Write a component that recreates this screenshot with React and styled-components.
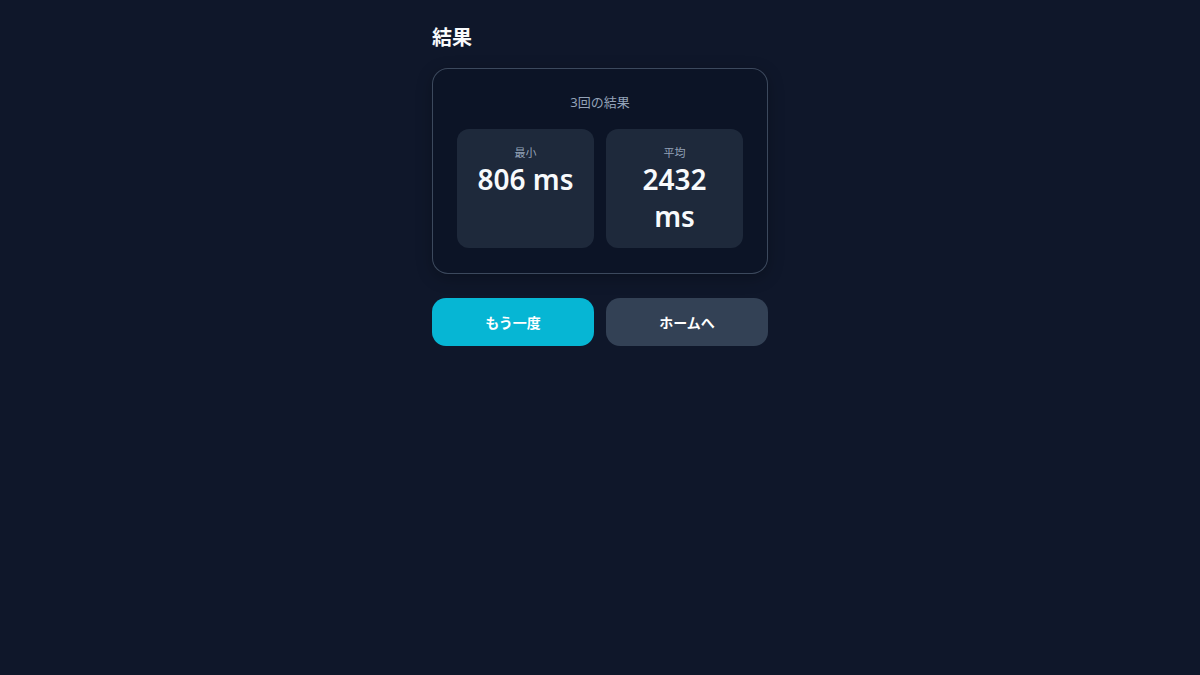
import React from 'react';
import styled, { createGlobalStyle } from 'styled-components';

const GlobalStyle = createGlobalStyle`
  * { box-sizing: border-box; }
  html, body {
    margin: 0;
    background: #0f172a;
    color: #f8fafc;
    font-family: "Noto Sans", "Noto Sans CJK JP", sans-serif;
  }
`;

const Page = styled.div`
  min-height: 675px;
  display: flex;
  justify-content: center;
  padding: 24px 0;
`;

const Column = styled.div`
  width: 336px;
`;

const Title = styled.h2`
  margin: 0 0 16px;
  font-size: 20px;
  line-height: 28px;
  font-weight: 700;
  color: #f8fafc;
`;

const Card = styled.div`
  border: 1px solid rgba(100, 116, 139, 0.55);
  border-radius: 16px;
  background: #0c1426;
  box-shadow: 0 4px 16px rgba(0, 0, 0, 0.25);
  padding: 23px 24px 25px;
`;

const Caption = styled.div`
  text-align: center;
  font-size: 13px;
  line-height: 20px;
  color: #94a3b8;
  margin-bottom: 17px;
`;

const StatGrid = styled.div`
  display: grid;
  grid-template-columns: 1fr 1fr;
  gap: 12px;
`;

const StatBox = styled.div`
  background: #1e293b;
  border-radius: 12px;
  padding: 16px 16px 13px;
  min-height: 119px;
  text-align: center;
`;

const StatLabel = styled.div`
  font-size: 11px;
  line-height: 16px;
  color: #94a3b8;
`;

const StatValue = styled.div`
  font-size: 28px;
  line-height: 37px;
  font-weight: 600;
  color: #f8fafc;
`;

const Actions = styled.div`
  display: grid;
  grid-template-columns: 1fr 1fr;
  gap: 12px;
  margin-top: 24px;
`;

const Button = styled.button`
  height: 48px;
  border: none;
  border-radius: 14px;
  font-family: inherit;
  font-size: 14px;
  font-weight: 600;
  color: #ffffff;
  background: ${p => (p.$primary ? '#06b6d4' : '#334155')};
  cursor: pointer;
`;

const stats = [
  { label: '最小', value: '806 ms' },
  { label: '平均', value: '2432 ms' },
];

export default function App() {
  return (
    <>
      <GlobalStyle />
      <Page>
        <Column>
          <Title>結果</Title>
          <Card>
            <Caption>3回の結果</Caption>
            <StatGrid>
              {stats.map(s => (
                <StatBox key={s.label}>
                  <StatLabel>{s.label}</StatLabel>
                  <StatValue>{s.value}</StatValue>
                </StatBox>
              ))}
            </StatGrid>
          </Card>
          <Actions>
            <Button $primary>もう一度</Button>
            <Button>ホームへ</Button>
          </Actions>
        </Column>
      </Page>
    </>
  );
}
